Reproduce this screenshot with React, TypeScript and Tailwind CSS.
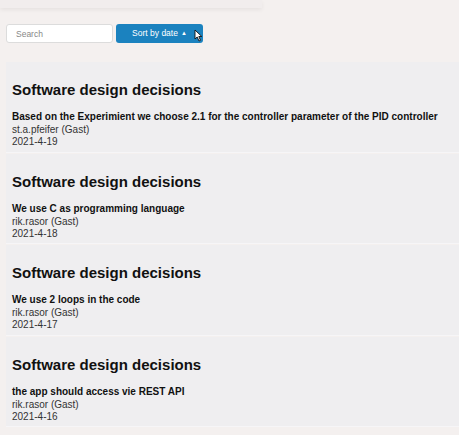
import React from "react";

const decisions = [
  {
    id: 1,
    text: "Based on the Experimient we choose 2.1 for the controller parameter of the PID controller",
    author: "st.a.pfeifer (Gast)",
    date: "2021-4-19",
  },
  { id: 2, text: "We use C as programming language", author: "rik.rasor (Gast)", date: "2021-4-18" },
  { id: 3, text: "We use 2 loops in the code", author: "rik.rasor (Gast)", date: "2021-4-17" },
  { id: 4, text: "the app should access vie REST API", author: "rik.rasor (Gast)", date: "2021-4-16" },
];

const DecisionCard = ({ item }: any) => {
  return (
    <div className="bg-[#efeef0] h-[90.5px] pl-[6px] pt-[19px] border-b border-[#f6f5f7] whitespace-nowrap">
      <h2 className="text-[15px] leading-[18px] font-bold text-[#111]">Software design decisions</h2>
      <p className="mt-[11px] text-[10px] leading-[13px] font-bold text-[#111]">{item?.text}</p>
      <p className="text-[10px] leading-[13px] text-[#333]">{item?.author}</p>
      <p className="text-[10px] leading-[12px] text-[#333]">{item?.date}</p>
    </div>
  );
};

const App = () => {
  return (
    <div className="w-[459px] h-[435px] overflow-hidden bg-[#f4f0ef] font-['Liberation_Sans',Arial,sans-serif]">
      <div className="w-[262px] h-[8px] bg-[#f1eded] shadow-[0_2px_4px_rgba(0,0,0,0.06)]" />
      <div className="flex items-center gap-[3px] pl-[6px] mt-[16px]">
        <input
          className="w-[107px] h-[19px] bg-white border border-[#dcdcdc] rounded-[3px] px-[9px] text-[8.5px] text-[#333] placeholder:text-[#888] outline-none"
          placeholder="Search"
        />
        <div className="relative">
          <button className="w-[87px] h-[19px] bg-[#1b82bf] rounded-[3px] text-white text-[8.5px] flex items-center justify-center gap-[3px]">
            Sort by date <span className="text-[6px]">▲</span>
          </button>
          <svg className="absolute left-[78px] top-[5px]" width="9" height="13" viewBox="0 0 9 13">
            <path d="M1 1 L1 10 L3.2 8 L5 12 L6.5 11.3 L4.8 7.5 L7.8 7.5 Z" fill="#fff" stroke="#111" strokeWidth="0.9" />
          </svg>
        </div>
      </div>
      <div className="mt-[19px] pl-[6px] flex flex-col gap-[1px]">
        {decisions.map((item) => (
          <DecisionCard key={item.id} item={item} />
        ))}
      </div>
    </div>
  );
};

export default App;
